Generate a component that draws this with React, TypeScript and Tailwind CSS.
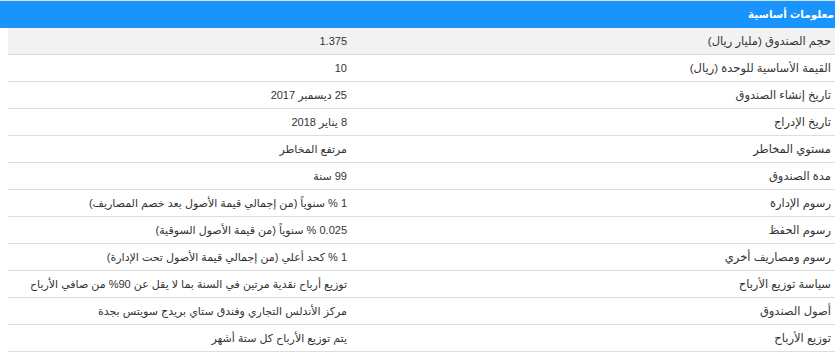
const rows: [string, string][] = [
  ["حجم الصندوق (مليار ريال)", "1.375"],
  ["القيمة الأساسية للوحدة (ريال)", "10"],
  ["تاريخ إنشاء الصندوق", "25 ديسمبر 2017"],
  ["تاريخ الإدراج", "8 يناير 2018"],
  ["مستوي المخاطر", "مرتفع المخاطر"],
  ["مدة الصندوق", "99 سنة"],
  ["رسوم الإدارة", "1 % سنوياً (من إجمالي قيمة الأصول بعد خصم المصاريف)"],
  ["رسوم الحفظ", "0.025 % سنوياً (من قيمة الأصول السوقية)"],
  ["رسوم ومصاريف أخري", "1 % كحد أعلي (من إجمالي قيمة الأصول تحت الإدارة)"],
  ["سياسة توزيع الأرباح", "توزيع أرباح نقدية مرتين في السنة بما لا يقل عن 90% من صافي الأرباح"],
  ["أصول الصندوق", "مركز الأندلس التجاري وفندق ستاي بريدج سويتس بجدة"],
  ["توزيع الأرباح", "يتم توزيع الأرباح كل ستة أشهر"],
];

export default function App() {
  return (
    <div
      dir="rtl"
      className="w-[835px] h-[364px] bg-white text-[11px] text-[#333]"
      style={{ fontFamily: '"Liberation Sans", "DejaVu Sans", sans-serif' }}
    >
      <div className="h-[1px] bg-[#d5e3ef]" />
      <div className="h-[27px] bg-[#1a94fd] flex items-center pr-[1px] text-[10.5px] text-white font-bold">
        معلومات أساسية
      </div>
      <div className="w-[827px]">
        {rows.map(([label, value], i) => (
          <div
            key={label}
            className={`flex h-[27px] items-center border-b border-[#dddddd] pt-[1px] ${
              i === 0 ? "bg-[#f2f2f2]" : "bg-white"
            }`}
          >
            <div className="w-[472px] pr-[4px] text-[11.5px]">{label}</div>
            <div className="flex-1 pr-[16px]">{value}</div>
          </div>
        ))}
      </div>
    </div>
  );
}
